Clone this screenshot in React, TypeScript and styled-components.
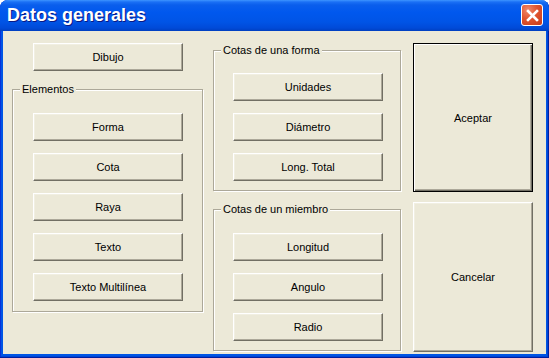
import React from 'react';
import styled, { createGlobalStyle } from 'styled-components';

const GlobalStyle = createGlobalStyle`
  html, body {
    margin: 0;
    padding: 0;
    background: #ffffff;
  }
  body {
    font-family: 'Liberation Sans', Arial, sans-serif;
  }
`;

const leftButtons = ['Forma', 'Cota', 'Raya', 'Texto', 'Texto Multilínea'];
const shapeButtons = ['Unidades', 'Diámetro', 'Long. Total'];
const memberButtons = ['Longitud', 'Angulo', 'Radio'];

export default function App() {
  return (
    <>
      <GlobalStyle />
      <Window>
        <TitleBar>
          <Title>Datos generales</Title>
          <CloseButton type='button' aria-label='Cerrar'>
            <svg width='13' height='13' viewBox='0 0 13 13'>
              <path d='M2 2 L11 11 M11 2 L2 11' stroke='#ffffff' strokeWidth='2.6' strokeLinecap='square' />
            </svg>
          </CloseButton>
        </TitleBar>
        <Client>
          <LeftColumn>
            <Indent>
              <PushButton type='button'>Dibujo</PushButton>
            </Indent>
            <GroupBox $height={223} $padTop={23} $padLeft={20} $gapTop={18}>
              <GroupTitle>Elementos</GroupTitle>
              {leftButtons.map((label) => (
                <PushButton key={label} type='button'>
                  {label}
                </PushButton>
              ))}
            </GroupBox>
          </LeftColumn>
          <MiddleColumn>
            <GroupBox $height={141} $padTop={22} $padLeft={19} $gapTop={0}>
              <GroupTitle>Cotas de una forma</GroupTitle>
              {shapeButtons.map((label) => (
                <PushButton key={label} type='button'>
                  {label}
                </PushButton>
              ))}
            </GroupBox>
            <GroupBox $height={142} $padTop={23} $padLeft={19} $gapTop={18}>
              <GroupTitle>Cotas de un miembro</GroupTitle>
              {memberButtons.map((label) => (
                <PushButton key={label} type='button'>
                  {label}
                </PushButton>
              ))}
            </GroupBox>
          </MiddleColumn>
          <RightColumn>
            <DialogButton type='button' $height={149} $isDefault>
              Aceptar
            </DialogButton>
            <DialogButton type='button' $height={150}>
              Cancelar
            </DialogButton>
          </RightColumn>
        </Client>
      </Window>
    </>
  );
}

const Window = styled.div`
  width: 549px;
  height: 358px;
  display: flex;
  flex-direction: column;
  box-sizing: border-box;
  border-radius: 8px 8px 0 0;
  overflow: hidden;
  background: #0055e5;
  box-shadow: inset -1px -1px 0 #001ea0, inset 1px 0 0 #0831d9, inset -2px -2px 0 #0046d5;
`;

const TitleBar = styled.div`
  height: 31px;
  flex-shrink: 0;
  display: flex;
  align-items: center;
  justify-content: space-between;
  padding: 0 6px 1px 7px;
  box-sizing: border-box;
  background: linear-gradient(
    to bottom,
    #3d95ff 0px,
    #1a70f5 2px,
    #0a5eec 5px,
    #0058ee 12px,
    #0054e6 22px,
    #004ad8 28px,
    #003fc0 31px
  );
`;

const Title = styled.span`
  color: #ffffff;
  font-family: 'Liberation Sans', Arial, sans-serif;
  font-size: 18px;
  font-weight: 700;
  text-shadow: 1px 1px 0 #0a1883;
`;

const CloseButton = styled.button`
  width: 22px;
  height: 22px;
  padding: 0;
  display: flex;
  align-items: center;
  justify-content: center;
  border: 1px solid #ffffff;
  border-radius: 3px;
  background: radial-gradient(circle at 30% 25%, #f08a6c 0%, #e0552f 45%, #c7391a 100%);
  cursor: pointer;
`;

const Client = styled.div`
  flex: 1;
  display: flex;
  align-items: flex-start;
  margin: 0 3px 4px 3px;
  padding: 12px 0 0 9px;
  background: #ece9d8;
`;

const LeftColumn = styled.div`
  width: 191px;
  display: flex;
  flex-direction: column;
`;

const Indent = styled.div`
  padding-left: 21px;
`;

const MiddleColumn = styled.div`
  width: 188px;
  margin-left: 10px;
  padding-top: 7px;
  display: flex;
  flex-direction: column;
`;

const RightColumn = styled.div`
  width: 120px;
  margin-left: 12px;
  display: flex;
  flex-direction: column;
  gap: 10px;
`;

const GroupBox = styled.div<{ $height: number; $padTop: number; $padLeft: number; $gapTop: number }>`
  position: relative;
  height: ${({ $height }) => $height}px;
  margin-top: ${({ $gapTop }) => $gapTop}px;
  box-sizing: border-box;
  padding: ${({ $padTop, $padLeft }) => `${$padTop}px 0 0 ${$padLeft}px`};
  border: 1px solid #aca899;
  box-shadow: 1px 1px 0 #ffffff, inset 1px 1px 0 #ffffff;
  display: flex;
  flex-direction: column;
  gap: 12px;
`;

const GroupTitle = styled.span`
  position: absolute;
  top: -7px;
  left: 7px;
  padding: 0 2px;
  background: #ece9d8;
  color: #000000;
  font-size: 11px;
  line-height: 13px;
`;

const PushButton = styled.button`
  width: 150px;
  height: 28px;
  padding: 0;
  box-sizing: border-box;
  background: #ece9d8;
  border-style: solid;
  border-width: 1px;
  border-color: #ffffff #716f64 #716f64 #ffffff;
  box-shadow: inset -1px -1px 0 #aca899, inset 1px 1px 0 #f1efe2;
  color: #000000;
  font-family: 'Liberation Sans', Arial, sans-serif;
  font-size: 11px;
  cursor: pointer;
`;

const DialogButton = styled.button<{ $height: number; $isDefault?: boolean }>`
  width: 120px;
  height: ${({ $height }) => $height}px;
  padding: 0;
  box-sizing: border-box;
  background: #ece9d8;
  border-style: solid;
  border-width: 1px;
  border-color: ${({ $isDefault }) =>
    $isDefault ? '#000000' : '#ffffff #716f64 #716f64 #ffffff'};
  box-shadow: ${({ $isDefault }) =>
    $isDefault
      ? 'inset 1px 1px 0 #ffffff, inset -1px -1px 0 #716f64, inset -2px -2px 0 #aca899'
      : 'inset -1px -1px 0 #aca899, inset 1px 1px 0 #f1efe2'};
  color: #000000;
  font-family: 'Liberation Sans', Arial, sans-serif;
  font-size: 11px;
  cursor: pointer;
`;
